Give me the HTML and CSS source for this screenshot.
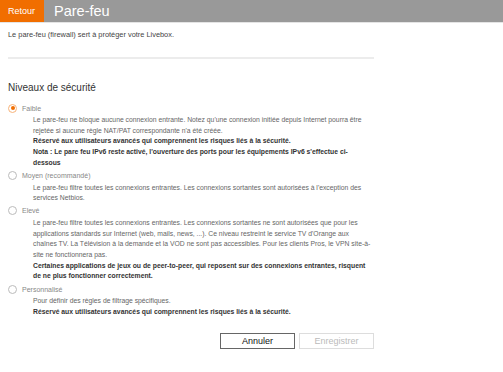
FILE: index.html
```html
<!DOCTYPE html>
<html lang="fr">
<head>
<meta charset="utf-8">
<title>Pare-feu</title>
<link rel="stylesheet" href="styles.css">
</head>
<body>
<header class="topbar">
  <a class="back">Retour</a>
  <h1 class="title">Pare-feu</h1>
</header>
<main class="content">
  <p class="intro">Le pare-feu (firewall) sert à protéger votre Livebox.</p>
  <hr class="sep">
  <h2 class="section-title">Niveaux de sécurité</h2>

  <div class="option">
    <label class="opt-label"><span class="radio checked"></span>Faible</label>
    <div class="desc">
      <p>Le pare-feu ne bloque aucune connexion entrante. Notez qu'une connexion initiée depuis Internet pourra être rejetée si aucune règle NAT/PAT correspondante n'a été créée.</p>
      <p class="strong">Réservé aux utilisateurs avancés qui comprennent les risques liés à la sécurité.</p>
      <p class="strong">Nota : Le pare feu IPv6 reste activé, l'ouverture des ports pour les équipements IPv6 s'effectue ci-dessous</p>
    </div>
  </div>

  <div class="option">
    <label class="opt-label"><span class="radio"></span>Moyen (recommandé)</label>
    <div class="desc">
      <p>Le pare-feu filtre toutes les connexions entrantes. Les connexions sortantes sont autorisées à l'exception des services Netbios.</p>
    </div>
  </div>

  <div class="option">
    <label class="opt-label"><span class="radio"></span>Elevé</label>
    <div class="desc">
      <p>Le pare-feu filtre toutes les connexions entrantes. Les connexions sortantes ne sont autorisées que pour les applications standards sur Internet (web, mails, news, ...). Ce niveau restreint le service TV d'Orange aux chaînes TV. La Télévision à la demande et la VOD ne sont pas accessibles. Pour les clients Pros, le VPN site-à-site ne fonctionnera pas.</p>
      <p class="strong">Certaines applications de jeux ou de peer-to-peer, qui reposent sur des connexions entrantes, risquent de ne plus fonctionner correctement.</p>
    </div>
  </div>

  <div class="option">
    <label class="opt-label"><span class="radio"></span>Personnalisé</label>
    <div class="desc">
      <p>Pour définir des règles de filtrage spécifiques.</p>
      <p class="strong">Réservé aux utilisateurs avancés qui comprennent les risques liés à la sécurité.</p>
    </div>
  </div>

  <div class="actions">
    <button class="btn">Annuler</button>
    <button class="btn disabled">Enregistrer</button>
  </div>
</main>
</body>
</html>
```
FILE: styles.css
```css
* { box-sizing: border-box; }
html, body { margin: 0; padding: 0; background: #fff; }
body {
  font-family: "Liberation Sans", Arial, sans-serif;
  color: #555;
}
.topbar {
  display: flex;
  align-items: stretch;
  height: 23px;
  background: #999;
  border-bottom: 1px solid #e4e4e4;
}
.back {
  display: flex;
  align-items: center;
  padding: 0 8px;
  width: 44px;
  background: #f16e00;
  color: #fff;
  font-size: 9px;
}
.title {
  margin: 0;
  padding-left: 10px;
  display: flex;
  align-items: center;
  font-size: 14.5px;
  font-weight: normal;
  color: #fff;
}
.content {
  width: 374px;
  padding: 0 0 0 8px;
}
.intro {
  margin: 7px 0 0;
  font-size: 7.4px;
  line-height: 10px;
  color: #444;
}
.sep {
  margin: 17px 0 0;
  border: 0;
  border-top: 2px solid #ececec;
  height: 0;
}
.section-title {
  margin: 22px 0 7.5px;
  font-size: 10px;
  font-weight: normal;
  color: #333;
  line-height: 14px;
}
.option { margin-top: 1.5px; }
.opt-label {
  display: flex;
  align-items: center;
  gap: 5px;
  font-size: 7px;
  line-height: 11px;
  color: #888;
}
.radio {
  width: 9px;
  height: 9px;
  border-radius: 50%;
  border: 1px solid #bbb;
  background: #fff;
  position: relative;
}
.radio.checked { border-color: #f7b37a; }
.radio.checked::after {
  content: "";
  position: absolute;
  left: 1.5px;
  top: 1.5px;
  width: 4px;
  height: 4px;
  border-radius: 50%;
  background: #f16e00;
}
.desc {
  margin: 1.5px 2px 0 25px;
  font-size: 6.8px;
  line-height: 10.7px;
  color: #666;
}
.desc p { margin: 0; }
.desc .strong {
  font-weight: bold;
  color: #333;
}
.actions {
  display: flex;
  justify-content: flex-end;
  gap: 4px;
  margin-top: 15.5px;
}
.btn {
  width: 75px;
  height: 16px;
  padding: 0;
  font-family: "Liberation Sans", Arial, sans-serif;
  font-size: 9px;
  background: #fff;
  border: 1px solid #666;
  color: #111;
}
.btn.disabled {
  border-color: #ddd;
  color: #bbb;
}
```
